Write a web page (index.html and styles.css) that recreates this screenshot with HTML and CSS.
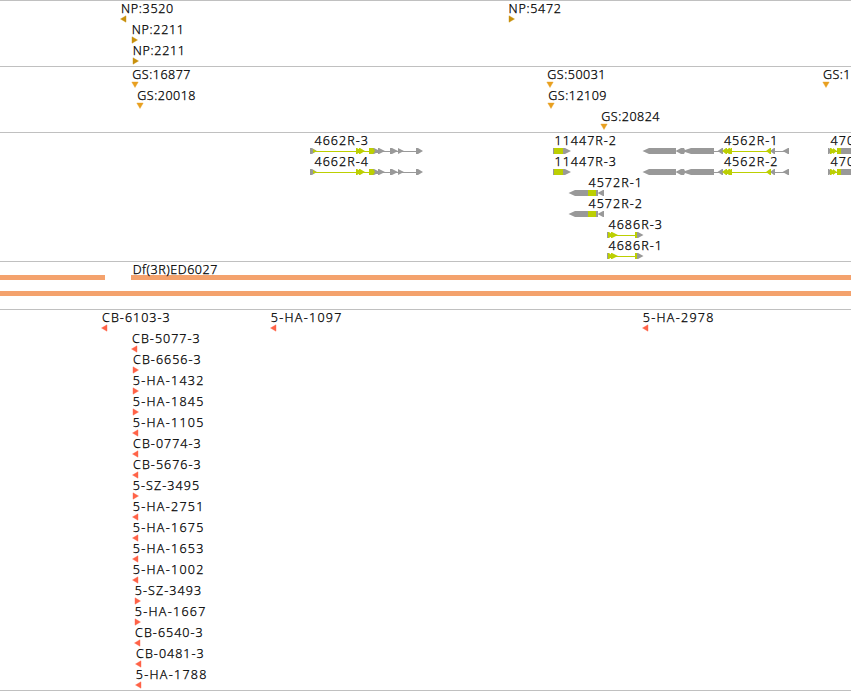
FILE: index.html
```
<!DOCTYPE html>
<html lang="en">
<head>
  <meta charset="UTF-8" />
  <meta name="viewport" content="width=device-width, initial-scale=1.0" />
  <title>Genome Map</title>
  <link rel="stylesheet" href="styles.css">
</head>
<body>
  <!-- shared markers and gene models -->
  <svg class="defs">
    <defs>
      <path id="left" d="M-.5 3L5 -.2V6.2Z" />
      <path id="right" d="M0 -.2L5.5 3L0 6.2Z" />
      <path id="down" d="M-.2 0H6.2L3 5.5Z" />
      <g id="g4662">
        <path class="grey" d="M310 0H312L317 3L312 6H310ZM373 0H374L380 3L374 6H373ZM378 0H379L385 3L379 6H378ZM390 0H392L398 3L392 6H390ZM398 0L404 3L398 6ZM416 0H418L423 3L418 6H416ZM379 3H416V4H379Z" />
        <path class="green" d="M313 1L316 3L313 5ZM315 3H370V4H315ZM356 0H357L362 3L357 6H356ZM359 0H360L365 3L360 6H359ZM369 0H373L375 3L373 6H369Z" />
      </g>
      <g id="g11447">
        <path class="grey" d="M553 0H565L571 3L565 6H553Z" />
        <path class="green" d="M554 0H563V6H554Z" />
      </g>
      <g id="g4572">
        <path class="grey" d="M568.5 3L575 0H598V6H575ZM597.5 3L603 0H604V6H603Z" />
        <path class="green" d="M588 0H596V6H588Z" />
      </g>
      <g id="g4686">
        <path class="grey" d="M607 0H608V6H607ZM637 0H638L643.5 3L638 6H637Z" />
        <path class="green" d="M608 0H609L613 3L609 6H608ZM611 0H612L618 3L612 6H611ZM616 3H636V4H616ZM635 0H637V6H635Z" />
      </g>
      <g id="g4562">
        <path class="grey" d="M642.5 3L649 0H676V6H649ZM675.5 3L681 0H684L685 2L691 0H714V6H691L685 4L684 6H681ZM714 3H719V4H714ZM717.5 3L722 0H723V6H722ZM770 3L774 0H775V6H774ZM774 3H784V4H774ZM782.5 3L788 0H789V6H788Z" />
        <path class="green" d="M722 3L726 0H727V6H726ZM725 3L729 0H730V6H729ZM728 3L731 0H732V6H731ZM730 3H768V4H730ZM766 3L770 0H771V6H770Z" />
      </g>
      <g id="g470">
        <path class="grey" d="M828 0H829L832 3L829 6H828ZM841 0H851V6H841Z" />
        <path class="green" d="M830 3H838V4H830ZM830 0H831L835 3L831 6H830ZM833 0L837 3L833 6ZM837 0H841V6H837Z" />
      </g>
    </defs>
  </svg>

  <main class="map">
    <section class="track np">
      <svg viewBox="0 1 851 65">
        <text x="120.9" y="13" textLength="52.3">NP:3520</text><use href="#left" x="121" y="16" />
        <text x="508.6" y="13" textLength="52.3">NP:5472</text><use href="#right" x="509" y="16" />
        <text x="131.7" y="34" textLength="52.3">NP:2211</text><use href="#right" x="132" y="37" />
        <text x="132.7" y="55" textLength="52.3">NP:2211</text><use href="#right" x="133" y="58" />
      </svg>
    </section>

    <section class="track gs">
      <svg viewBox="0 67 851 65">
        <text x="132.2" y="79" textLength="58.3">GS:16877</text><use href="#down" x="132" y="82" />
        <text x="547.2" y="79" textLength="58.3">GS:50031</text><use href="#down" x="547" y="82" />
        <text x="822.9" y="79" textLength="27.5">GS:1</text><use href="#down" x="823" y="82" />
        <text x="137.2" y="100" textLength="58.3">GS:20018</text><use href="#down" x="137" y="103" />
        <text x="548.2" y="100" textLength="58.3">GS:12109</text><use href="#down" x="548" y="103" />
        <text x="601.2" y="121" textLength="58.3">GS:20824</text><use href="#down" x="601" y="124" />
      </svg>
    </section>

    <section class="track genes">
      <svg viewBox="0 133 851 128">
        <text x="314.5" y="145" textLength="53.5">4662R-3</text><use href="#g4662" y="148" />
        <text x="554.5" y="145" textLength="61.5">11447R-2</text><use href="#g11447" y="148" />
        <text x="723.9" y="145" textLength="53.5">4562R-1</text><use href="#g4562" y="148" />
        <text x="830.4" y="145" textLength="23.8">470</text><use href="#g470" y="148" />
        <text x="314.5" y="166" textLength="53.5">4662R-4</text><use href="#g4662" y="169" />
        <text x="554.5" y="166" textLength="61.5">11447R-3</text><use href="#g11447" y="169" />
        <text x="723.9" y="166" textLength="53.5">4562R-2</text><use href="#g4562" y="169" />
        <text x="830.4" y="166" textLength="23.8">470</text><use href="#g470" y="169" />
        <text x="588.5" y="187" textLength="53.5">4572R-1</text><use href="#g4572" y="190" />
        <text x="588.5" y="208" textLength="53.5">4572R-2</text><use href="#g4572" y="211" />
        <text x="608.5" y="229" textLength="53.5">4686R-3</text><use href="#g4686" y="232" />
        <text x="608.5" y="250" textLength="53.5">4686R-1</text><use href="#g4686" y="253" />
      </svg>
    </section>

    <section class="track deficiencies">
      <svg viewBox="0 262 851 47">
        <rect x="0" y="275" width="105" height="5" />
        <rect x="131" y="275" width="720" height="5" />
        <rect x="0" y="291" width="851" height="5" />
        <text x="132.7" y="274" textLength="84.6">Df(3R)ED6027</text>
      </svg>
    </section>

    <section class="track insertions">
      <svg viewBox="0 310 851 380">
        <text x="102.1" y="322" textLength="67.6">CB-6103-3</text><use href="#left" x="102" y="325" />
        <text x="270.8" y="322" textLength="70.6">5-HA-1097</text><use href="#left" x="271" y="325" />
        <text x="642.8" y="322" textLength="70.6">5-HA-2978</text><use href="#left" x="643" y="325" />
        <text x="132.1" y="343" textLength="67.6">CB-5077-3</text><use href="#left" x="132" y="346" />
        <text x="133.1" y="364" textLength="67.6">CB-6656-3</text><use href="#right" x="133" y="367" />
        <text x="132.8" y="385" textLength="70.6">5-HA-1432</text><use href="#right" x="133" y="388" />
        <text x="132.8" y="406" textLength="70.6">5-HA-1845</text><use href="#right" x="133" y="409" />
        <text x="132.8" y="427" textLength="70.6">5-HA-1105</text><use href="#left" x="133" y="430" />
        <text x="133.1" y="448" textLength="67.6">CB-0774-3</text><use href="#left" x="133" y="451" />
        <text x="133.1" y="469" textLength="67.6">CB-5676-3</text><use href="#left" x="133" y="472" />
        <text x="132.8" y="490" textLength="66.3">5-SZ-3495</text><use href="#right" x="133" y="493" />
        <text x="132.8" y="511" textLength="70.6">5-HA-2751</text><use href="#left" x="133" y="514" />
        <text x="132.8" y="532" textLength="70.6">5-HA-1675</text><use href="#left" x="133" y="535" />
        <text x="132.8" y="553" textLength="70.6">5-HA-1653</text><use href="#left" x="133" y="556" />
        <text x="132.8" y="574" textLength="70.6">5-HA-1002</text><use href="#left" x="133" y="577" />
        <text x="134.8" y="595" textLength="66.3">5-SZ-3493</text><use href="#right" x="135" y="598" />
        <text x="134.8" y="616" textLength="70.6">5-HA-1667</text><use href="#right" x="135" y="619" />
        <text x="135.1" y="637" textLength="67.6">CB-6540-3</text><use href="#left" x="135" y="640" />
        <text x="136.1" y="658" textLength="67.6">CB-0481-3</text><use href="#left" x="136" y="661" />
        <text x="135.8" y="679" textLength="70.6">5-HA-1788</text><use href="#left" x="136" y="682" />
      </svg>
    </section>
  </main>
</body>
</html>
```
FILE: styles.css
```
body {
  margin: 0;
  background: #fff;
}
.defs {
  display: none;
}
.map {
  width: 851px;
  overflow: hidden;
  border-bottom: 1px solid #c0c0c0;
}
.track {
  border-top: 1px solid #c0c0c0;
}
.track svg {
  display: block;
  width: 851px;
}
text {
  font-family: "Noto Sans", "Open Sans", sans-serif;
  font-size: 12.5px;
  font-weight: 300;
  fill: #000;
  stroke: #000;
  stroke-width: 0.25;
}
.np use { fill: #c8900c; stroke: #c8900c; stroke-width: 0.4; }
.gs use { fill: #e8a020; stroke: #e8a020; stroke-width: 0.4; }
.insertions use { fill: #ff6347; stroke: #ff6347; stroke-width: 0.4; }
.deficiencies rect { fill: #f4a26d; }
.grey { fill: #999; }
.green { fill: #bccf02; }
```
